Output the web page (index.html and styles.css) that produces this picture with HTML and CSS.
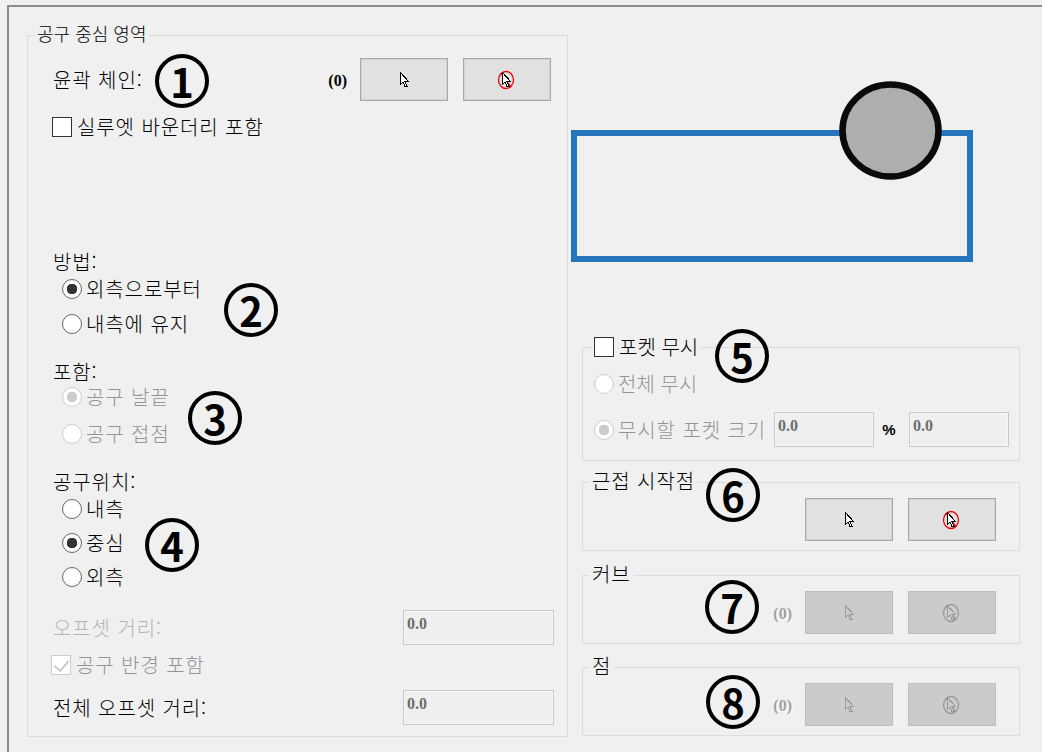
FILE: index.html
```html
<!DOCTYPE html>
<html lang="ko">
<head>
  <meta charset="UTF-8">
  <title>공구 중심 영역</title>
  <link rel="stylesheet" href="styles.css">
</head>
<body>
  <svg class="defs" width="0" height="0">
    <defs>
      <path id="arrow" d="M1.5 .5V12.5L4 10 6 14.5H8L6 9.5H9.5Z"/>
    </defs>
  </svg>

  <div class="window">
    <div class="group main">
      <span class="legend small-text">공구 중심 영역</span>

      <div class="chain-row">
        <span class="label">윤곽 체인:</span>
        <span class="count">(0)</span>
        <button class="pick"><svg class="cur" width="10" height="15"><use href="#arrow"/></svg></button>
        <button class="pick"><svg class="cur-no" width="18" height="20" viewBox="0 0 18 20"><ellipse cx="9" cy="10" rx="7.5" ry="8.5"/><path d="M4 3L14 17"/><use href="#arrow" x="4" y="2"/></svg></button>
      </div>
      <label class="check first-check"><input type="checkbox">실루엣 바운더리 포함</label>

      <div class="label head method">방법:</div>
      <div class="radios">
        <label class="radio"><input type="radio" name="m" checked>외측으로부터</label>
        <label class="radio"><input type="radio" name="m">내측에 유지</label>
      </div>

      <div class="label head">포함:</div>
      <div class="radios off tight">
        <label class="radio"><input type="radio" name="i" checked disabled>공구 날끝</label>
        <label class="radio"><input type="radio" name="i" disabled>공구 접점</label>
      </div>

      <div class="label head">공구위치:</div>
      <div class="radios close">
        <label class="radio"><input type="radio" name="p">내측</label>
        <label class="radio"><input type="radio" name="p" checked>중심</label>
        <label class="radio"><input type="radio" name="p">외측</label>
      </div>

      <div class="value-row offset">
        <span class="label dim">오프셋 거리:</span>
        <input class="num" value="0.0" disabled>
      </div>
      <label class="check radius off"><input type="checkbox" checked disabled>공구 반경 포함</label>
      <div class="value-row total">
        <span class="label">전체 오프셋 거리:</span>
        <input class="num" value="0.0" disabled>
      </div>
    </div>

    <div class="side">
      <svg class="preview" width="449" height="312">
        <rect x="3" y="98" width="396" height="126"/>
        <ellipse cx="319.5" cy="95.5" rx="48" ry="46"/>
      </svg>

      <div class="group pocket">
        <label class="legend check flat"><input type="checkbox">포켓 무시</label>
        <label class="radio off flat"><input type="radio" name="k" disabled>전체 무시</label>
        <div class="size-row">
          <label class="radio off size-label"><input type="radio" name="k" checked disabled>무시할 포켓 크기</label>
          <input class="num short" value="0.0" disabled>
          <span class="pct">%</span>
          <input class="num short" value="0.0" disabled>
        </div>
      </div>

      <div class="group picks near">
        <span class="legend">근접 시작점</span>
        <button class="pick"><svg class="cur" width="10" height="15"><use href="#arrow"/></svg></button>
        <button class="pick"><svg class="cur-no" width="18" height="20" viewBox="0 0 18 20"><ellipse cx="9" cy="10" rx="7.5" ry="8.5"/><path d="M4 3L14 17"/><use href="#arrow" x="4" y="2"/></svg></button>
      </div>

      <div class="group picks curve">
        <span class="legend">커브</span>
        <span class="count off">(0)</span>
        <button class="pick" disabled><svg class="cur" width="10" height="15"><use href="#arrow"/></svg></button>
        <button class="pick" disabled><svg class="cur-no" width="18" height="20" viewBox="0 0 18 20"><ellipse cx="9" cy="10" rx="7.5" ry="8.5"/><path d="M4 3L14 17"/><use href="#arrow" x="4" y="2"/></svg></button>
      </div>

      <div class="group picks point">
        <span class="legend">점</span>
        <span class="count off">(0)</span>
        <button class="pick" disabled><svg class="cur" width="10" height="15"><use href="#arrow"/></svg></button>
        <button class="pick" disabled><svg class="cur-no" width="18" height="20" viewBox="0 0 18 20"><ellipse cx="9" cy="10" rx="7.5" ry="8.5"/><path d="M4 3L14 17"/><use href="#arrow" x="4" y="2"/></svg></button>
      </div>
    </div>
  </div>

  <span class="mark m1">1</span>
  <span class="mark m2">2</span>
  <span class="mark m3">3</span>
  <span class="mark m4">4</span>
  <span class="mark m5">5</span>
  <span class="mark m6">6</span>
  <span class="mark m7">7</span>
  <span class="mark m8">8</span>
</body>
</html>
```

FILE: styles.css
```css
* {
  box-sizing: border-box;
}
html, body {
  height: 100%;
}
body {
  margin: 0;
  position: relative;
  overflow: hidden;
  background: #f0f0f0;
  font-family: "Noto Sans CJK KR", "Noto Sans", sans-serif;
  font-size: 20px;
  font-weight: 300;
  line-height: 26px;
  letter-spacing: .9px;
  color: #000;
}
.small-text {
  font-size: 18px;
  letter-spacing: 0;
}
.flat {
  letter-spacing: 0;
}
.defs {
  position: absolute;
}
.window {
  display: flex;
  gap: 3px;
  height: 747px;
  margin: 5px 0 0 7px;
  padding: 28px 0 0 18px;
  border-top: 2px solid #8c8c8c;
  border-left: 2px solid #8c8c8c;
}

/* group boxes */
.group {
  position: relative;
  border: 1px solid #dcdcdc;
}
.legend {
  position: absolute;
  top: -15px;
  left: 6px;
  padding: 0 3px;
  background: #f0f0f0;
  white-space: nowrap;
}
.main > .legend {
  top: -16px;
}
.legend.check {
  top: -14px;
  left: 9px;
}
.main {
  flex: none;
  width: 541px;
  height: 702px;
  padding: 22px 13px 0 25px;
}
.side {
  flex: none;
  width: 449px;
}
.side .group {
  margin-left: 11px;
}
.preview {
  display: block;
}
.preview rect {
  fill: none;
  stroke: #2676bd;
  stroke-width: 6;
}
.preview ellipse {
  fill: #adafad;
  stroke: #0a0a0a;
  stroke-width: 6.5;
}

/* left column rows */
.chain-row {
  display: flex;
  align-items: center;
  height: 43px;
  margin-right: 3px;
}
.chain-row .label {
  margin-right: auto;
}
.chain-row .count {
  margin: 3px 13px 0 0;
}
.chain-row .pick + .pick {
  margin-left: 15px;
}
.label {
  white-space: nowrap;
}
.dim {
  color: #b4b4b4;
}
.head {
  height: 26px;
  margin-top: 22px;
}
.method {
  margin-top: 109px;
}
.first-check {
  margin-top: 13px;
}
.radios {
  display: flex;
  flex-direction: column;
  gap: 9px;
  padding-left: 9px;
  margin-top: 1px;
}
.radios.tight {
  gap: 11px;
  margin-top: -1px;
}
.radios.close {
  gap: 8px;
}
.value-row {
  display: flex;
  align-items: center;
  justify-content: space-between;
  height: 35px;
}
.offset {
  margin-top: 20px;
}
.radius {
  gap: 3px;
  margin-top: 7px;
}
.total {
  margin-top: 12px;
}

/* controls */
.check,
.radio {
  display: flex;
  align-items: center;
  gap: 4px;
  height: 26px;
  white-space: nowrap;
}
.check {
  gap: 5px;
  margin-left: -1px;
}
.off {
  color: #949494;
}
input[type="checkbox"],
input[type="radio"] {
  appearance: none;
  flex: none;
  position: relative;
  width: 20px;
  height: 20px;
  margin: 0;
  background: #fff;
  border: 1.5px solid #333;
}
input[type="radio"] {
  border-color: #666;
  border-radius: 50%;
}
input[type="radio"]:checked {
  background: radial-gradient(circle, #333 0 5px, #fff 5.5px);
}
input[type="radio"]:disabled {
  border-color: #ccc;
}
input[type="radio"]:checked:disabled {
  background: radial-gradient(circle, #ccc 0 5px, #fff 5.5px);
}
input[type="checkbox"]:disabled {
  border-color: #ccc;
}
input[type="checkbox"]:checked::after {
  content: "";
  position: absolute;
  left: 5px;
  top: 1px;
  width: 7px;
  height: 12px;
  border: solid #ccc;
  border-width: 0 2px 2px 0;
  transform: rotate(40deg);
}
.radius input {
  margin-left: -1px;
}
.num {
  width: 151px;
  height: 35px;
  padding: 0 0 8px 3px;
  background: #efefef;
  border: 1px solid #c8c8c8;
  border-radius: 0;
  box-shadow: inset 0 0 0 1px #f6f6f6;
  font-family: "Liberation Serif", serif;
  font-size: 16px;
  font-weight: 700;
  letter-spacing: 0;
  color: #6d6d6d;
  opacity: 1;
}
.count {
  font-family: "Liberation Serif", serif;
  font-size: 16px;
  font-weight: 700;
  letter-spacing: 0;
}
.count.off {
  margin: 10px 13px 0 0;
  color: #a0a0a0;
  text-shadow: 1px 1px #fff;
}
.pick {
  display: flex;
  align-items: center;
  justify-content: center;
  flex: none;
  width: 88px;
  height: 43px;
  padding: 0;
  background: #e1e1e1;
  border: 1px solid #a8a8a8;
  border-radius: 0;
  box-shadow: inset 0 0 0 1px #d2d2d2;
}
.pick:disabled {
  background: #cbcbcb;
  border-color: #bdbdbd;
  box-shadow: none;
}
.cur,
.cur-no {
  shape-rendering: crispEdges;
}
.cur-no {
  margin-left: -2px;
}
.cur use,
.cur-no use {
  fill: #fff;
  stroke: #000;
}
.cur-no ellipse,
.cur-no path {
  fill: none;
  stroke: #f00002;
  stroke-width: 1.3;
  shape-rendering: auto;
}
.pick:disabled use {
  fill: #cbcbcb;
  stroke: #999;
}
.pick:disabled ellipse,
.pick:disabled path {
  stroke: #999;
}

/* right column groups */
.pocket {
  height: 114px;
  padding: 23px 10px 0 11px;
}
.size-row {
  display: flex;
  align-items: center;
  height: 35px;
  margin-top: 15px;
}
.size-label {
  width: 180px;
}
.short {
  width: 100px;
}
.pct {
  flex: none;
  width: 35px;
  padding-right: 5px;
  text-align: center;
  font-family: "Liberation Sans", sans-serif;
  font-size: 15px;
  font-weight: 700;
  letter-spacing: 0;
}
.picks {
  display: flex;
  justify-content: flex-end;
  gap: 15px;
  height: 69px;
  padding: 15px 23px 0 0;
}
.picks .count {
  margin-right: -2px;
}
.near {
  margin-top: 21px;
}
.curve {
  margin-top: 24px;
}
.point {
  margin-top: 23px;
}

/* circled callouts over the form */
.mark {
  position: absolute;
  display: flex;
  align-items: center;
  justify-content: center;
  width: 54px;
  height: 54px;
  background: none;
  border: 4px solid #000;
  border-radius: 50%;
  font-size: 40px;
  font-weight: 700;
  line-height: 1;
  letter-spacing: 0;
}
.m1 { left: 155px; top: 54px; }
.m2 { left: 224px; top: 283px; }
.m3 { left: 188px; top: 391px; }
.m4 { left: 145px; top: 518px; }
.m5 { left: 715px; top: 329px; }
.m6 { left: 706px; top: 468px; }
.m7 { left: 705px; top: 580px; }
.m8 { left: 706px; top: 675px; }
```
